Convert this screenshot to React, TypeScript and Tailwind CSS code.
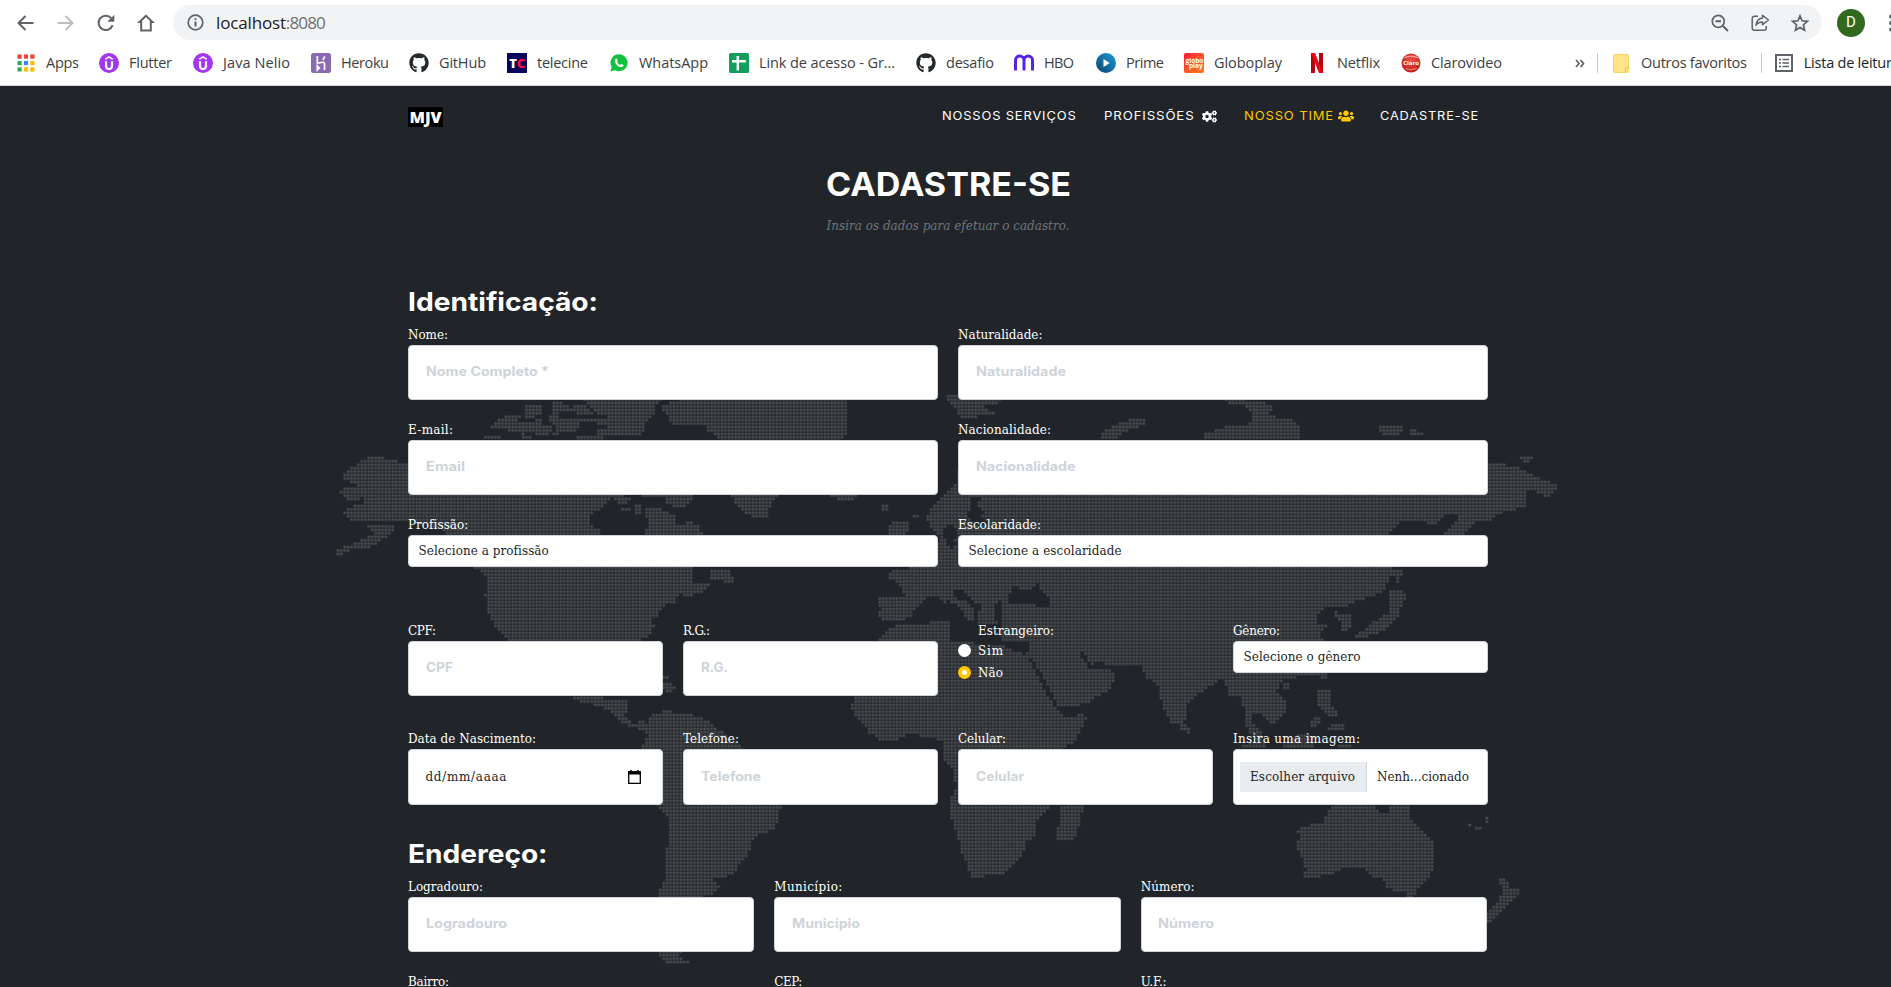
import { useLayoutEffect, useRef, type ReactNode } from "react";
import { FaCogs, FaUsers, FaGithub } from "react-icons/fa";

const SLAB = "font-['DejaVu_Serif_Condensed','DejaVu_Serif',serif] [font-stretch:condensed]";
const GEO = "font-['Inter','Open_Sans',sans-serif]";
const UI = "font-['Open_Sans','Noto_Sans',sans-serif]";

/* Text set to a given measure by adjusting its tracking. */
function Fit({ w, className = "", children }: { w: number; className?: string; children: string }) {
  const ref = useRef<HTMLSpanElement>(null);
  useLayoutEffect(() => {
    const el = ref.current;
    if (!el) return;
    el.style.letterSpacing = "0px";
    const natural = el.getBoundingClientRect().width;
    el.style.letterSpacing = `${(w - natural) / Math.max(1, children.length - 1)}px`;
  }, [w, children]);
  return (
    <span ref={ref} className={`inline-block whitespace-pre ${className}`}>
      {children}
    </span>
  );
}

/* Text set to a given measure by widening its letters. */
function Wide({ w, className = "", children }: { w: number; className?: string; children: string }) {
  const ref = useRef<HTMLSpanElement>(null);
  useLayoutEffect(() => {
    const el = ref.current;
    if (!el) return;
    el.style.transform = "none";
    const natural = el.getBoundingClientRect().width;
    el.style.transform = `scaleX(${w / natural})`;
  }, [w, children]);
  return (
    <span className={`inline-block shrink-0 text-left ${className}`} style={{ width: w }}>
      <span ref={ref} className="inline-block origin-left whitespace-pre">
        {children}
      </span>
    </span>
  );
}

/* ---------- dotted world map ---------- */

const LAND: string[] = [
  "377,456 387,460 408,463 612,470 614,495 606,503 593,513 587,520 587,524 598,530 600,536 624,545 647,535 649,522 645,508 659,508 675,517 675,526 683,526 689,521 696,525 702,535 698,550 691,567 692,585 708,583 706,591 691,593 689,598 679,593 673,599 674,603 663,605 657,615 648,620 655,625 648,635 638,641 636,660 512,660 512,641 497,627 489,613 486,593 489,587 487,577 475,567 448,535 444,530 408,520 401,522 393,522 377,523 369,522 355,522 344,513 350,507 365,503 363,498 350,502 346,497 340,492 349,487 361,487 346,480 344,473 357,465 365,459",
  "375,523 393,524 391,533 385,538 369,547 351,550 336,557 338,550 357,542 375,534 367,527",
  "712,568 726,568 732,578 730,585 724,579 710,580",
  "614,495 630,496 626,505 618,502",
  "622,506 630,506 630,511 622,511",
  "637,505 641,505 641,514 637,514",
  "642,490 691,490 691,497 689,503 679,508 667,503 665,498 642,498",
  "663,405 687,398 847,398 847,420 844,438 800,470 776,495 771,503 765,517 760,520 753,517 740,508 732,495 740,460 720,438 710,432 708,425 683,427 667,422 671,417 663,410",
  "830,490 857,490 857,496 853,500 842,502 832,496",
  "528,405 540,405 540,413 534,417 526,417",
  "493,424 506,416 520,416 516,422 530,424 542,418 542,424 553,426 546,436 532,433 524,434 508,430 493,428",
  "555,401 569,405 571,412 557,413 558,420 579,420 579,427 573,433 555,434 557,427 551,420",
  "573,404 583,405 593,413 590,415 577,413",
  "585,398 663,398 655,405 655,410 647,420 644,425 640,437 612,437 596,433 598,428 610,427 612,424 581,423 583,417 606,419 608,415 602,415 591,407",
  "485,435 498,435 498,440 485,440",
  "522,435 532,435 532,438 522,438",
  "578,437 604,437 604,441 578,441",
  "896,520 906,520 908,530 902,535 889,533 891,527",
  "882,503 886,503 886,510 882,510",
  "912,513 917,513 917,517 912,517",
  "957,483 958,470 1489,463 1493,463 1517,467 1534,477 1552,483 1558,488 1548,498 1538,492 1526,490 1524,507 1501,512 1491,520 1475,520 1466,533 1448,535 1446,532 1460,518 1462,513 1446,513 1434,525 1426,522 1397,523 1385,535 1385,550 1393,568 1389,577 1381,593 1350,603 1340,608 1325,608 1314,615 1318,625 1326,625 1318,635 1324,641 1330,660 1326,673 1299,677 1283,680 1275,690 1285,703 1285,712 1271,725 1267,717 1254,712 1250,712 1251,723 1260,730 1262,747 1254,738 1246,723 1246,710 1242,697 1232,698 1228,685 1222,678 1205,688 1187,703 1185,718 1177,725 1171,723 1162,700 1158,683 1150,680 1142,667 1107,665 1104,660 1093,664 1083,652 1077,648 1078,655 1088,668 1098,668 1107,667 1115,678 1107,690 1087,702 1071,708 1060,708 1046,680 1036,663 1028,655 1028,660 1038,680 1046,697 1058,710 1062,718 1083,714 1085,720 1075,740 1062,749 1045,775 1050,805 1034,823 1034,837 1024,843 1024,850 1015,863 1001,874 979,877 973,877 964,855 960,840 954,823 950,807 951,803 957,787 955,770 944,760 944,740 928,738 910,733 904,737 885,742 869,732 865,723 855,715 852,707 855,697 879,660 879,641 887,632 891,627 916,623 949,622 953,612 944,603 940,598 928,597 922,602 914,608 910,617 900,621 889,622 879,617 882,610 879,602 881,596 906,597 900,583 891,578 889,572 908,568 925,560 938,552 940,537 934,531 930,527 928,517 932,507",
  "947,400 950,395 1001,398 1001,402 983,406 977,417 967,420 958,415 956,407",
  "981,408 993,413 989,417 981,412",
  "1099,440 1107,430 1123,422 1137,418 1146,418 1146,424 1128,430 1112,440",
  "1226,398 1260,401 1271,407 1267,416 1283,418 1293,420 1299,427 1297,440 1205,440 1205,433 1226,427 1250,424 1254,416 1250,407 1230,403",
  "1379,425 1403,427 1397,434 1383,434",
  "1408,428 1416,430 1424,435 1412,434",
  "1521,456 1532,456 1530,460 1524,463",
  "1334,612 1348,613 1352,627 1344,630 1340,620",
  "1395,568 1403,568 1401,574 1396,584",
  "1391,590 1407,593 1401,603 1395,620 1383,630 1360,640 1354,638 1373,623 1389,613 1389,597",
  "1320,690 1328,690 1328,705 1338,710 1338,716 1330,716 1320,706",
  "1342,724 1342,731 1327,729 1332,724",
  "1318,716 1320,720 1313,727 1310,724",
  "1282,747 1290,740 1303,733 1312,738 1312,747",
  "1240,743 1264,742 1262,748 1244,748",
  "1340,743 1350,743 1350,748 1340,748",
  "1284,681 1289,681 1287,688 1283,688",
  "1322,673 1326,673 1325,679 1321,679",
  "1182,723 1188,726 1190,733 1183,731",
  "1062,808 1068,803 1082,803 1081,813 1075,837 1071,841 1059,840 1059,827 1063,820",
  "1299,830 1307,826 1326,822 1328,810 1336,804 1373,804 1377,812 1389,813 1395,803 1407,803 1409,817 1422,830 1434,845 1434,863 1426,880 1417,888 1412,897 1408,897 1406,892 1397,892 1389,887 1383,880 1373,877 1366,867 1348,866 1332,873 1311,878 1303,877 1307,870 1301,853 1297,847 1300,838",
  "1501,876 1509,887 1519,891 1511,902 1501,910 1487,925 1487,912 1499,900 1505,893 1502,884",
  "1469,822 1475,829 1482,826 1475,832",
  "1485,818 1489,818 1489,822 1485,822",
  "571,695 587,697 593,697 626,700 627,712 622,715 632,725 642,721 647,723 655,714 667,711 700,717 716,728 728,737 742,748 781,800 781,805 777,817 773,830 753,837 747,853 732,873 722,880 712,878 719,885 712,893 700,898 695,925 679,953 679,957 689,963 667,963 659,952 655,920 659,897 659,890 667,880 667,857 672,820 657,806 640,770 642,748 649,737 647,730 636,728 624,723 618,717 606,708 596,705 592,702 580,702",
  "663,680 667,683 674,686 671,692 666,691 663,688",
  "665,675 669,675 669,679 665,679",
];

const WATER: string[] = [
  "949,622 966,618 975,624 1001,625 1003,640 1028,641 1027,655 1012,650 1000,645 985,648 970,641 950,640",
  "953,588 962,590 972,600 984,607 976,612 966,602 954,598",
  "975,612 979,612 979,628 975,628",
  "996,605 1001,600 1002,626 993,616",
  "945,600 958,605 966,618 950,622",
  "1009,595 1015,583 1022,590 1030,589 1038,581 1040,590 1051,600 1050,607 1040,607 1032,602 1009,603",
  "973,497 980,497 978,507 984,512 981,519 990,522 978,526 968,518 970,507",
  "945,527 953,524 958,535 952,540 958,545 950,548 944,538",
];

const PITCH = 3.43;

type Pt = [number, number];
const parse = (s: string): Pt[] => s.split(" ").map((p) => p.split(",").map(Number) as Pt);

function inside(poly: Pt[], x: number, y: number) {
  let hit = false;
  for (let i = 0, j = poly.length - 1; i < poly.length; j = i++) {
    const [xi, yi] = poly[i];
    const [xj, yj] = poly[j];
    if (yi > y !== yj > y && x < ((xj - xi) * (y - yi)) / (yj - yi) + xi) hit = !hit;
  }
  return hit;
}

function buildCells() {
  const land = LAND.map(parse);
  const water = WATER.map(parse);
  const box = (p: Pt[]) => [
    Math.min(...p.map((q) => q[0])) - 2,
    Math.max(...p.map((q) => q[0])) + 2,
    Math.min(...p.map((q) => q[1])),
    Math.max(...p.map((q) => q[1])),
  ];
  const boxed = land.map((p) => ({ p, b: box(p) }));
  let d = "";
  for (let r = 115; r < 285; r++) {
    const y = (r + 0.5) * PITCH;
    const rowLand = boxed.filter(({ b }) => y >= b[2] && y <= b[3]);
    let start = -1;
    for (let c = 95; c < 462; c++) {
      const x = (c + 0.5) * PITCH;
      const on =
        rowLand.some(({ p, b }) => x >= b[0] && x <= b[1] && (inside(p, x - 1.3, y) || inside(p, x + 1.3, y))) &&
        !water.some((p) => inside(p, x, y));
      if (on && start < 0) start = c;
      if (!on && start >= 0) {
        d += `M${(start * PITCH).toFixed(2)} ${(r * PITCH).toFixed(2)}h${((c - start) * PITCH).toFixed(2)}v${PITCH}h${(-(c - start) * PITCH).toFixed(2)}z`;
        start = -1;
      }
    }
  }
  return d;
}

const CELLS = buildCells();

function WorldMap() {
  return (
    <svg className="pointer-events-none absolute left-0 top-0" width="1891" height="901" viewBox="0 86 1891 901" aria-hidden="true">
      <defs>
        <pattern id="dots" width={PITCH} height={PITCH} patternUnits="userSpaceOnUse">
          <rect width={PITCH} height={PITCH} fill="#292d31" />
          <rect x="0.6" y="0.6" width="2.2" height="2.2" rx="0.5" fill="#4a4e51" />
        </pattern>
      </defs>
      <path d={CELLS} fill="url(#dots)" />
    </svg>
  );
}

/* ---------- browser chrome ---------- */

function Udemy() {
  return (
    <svg width="20" height="20" viewBox="0 0 20 20">
      <circle cx="10" cy="10" r="10" fill="#a435f0" />
      <path d="M6.300 6.200 10 3.900l3.700 2.300" fill="none" stroke="#fff" strokeWidth="1.700" />
      <path d="M7 8.200v4.800a3 3 0 0 0 6 0V8.200" fill="none" stroke="#fff" strokeWidth="2.200" />
    </svg>
  );
}

function AppsIcon() {
  const colors = ["#ea4335", "#ea4335", "#ea4335", "#34a853", "#4285f4", "#fbbc04", "#34a853", "#fbbc04", "#fbbc04"];
  return (
    <svg width="20" height="20" viewBox="0 0 20 20">
      {colors.map((c, i) => (
        <rect key={i} x={1.5 + (i % 3) * 6.4} y={1.5 + Math.floor(i / 3) * 6.4} width="4.2" height="4.2" fill={c} />
      ))}
    </svg>
  );
}

function Heroku() {
  return (
    <svg width="20" height="20" viewBox="0 0 20 20">
      <rect width="20" height="20" rx="2.5" fill="#8a6bb1" />
      <path d="M6.300 3v7.500c2-1 7.200-2.400 7.200.5v6M6.300 13v4l2-2zM13.500 3.200c-.1 1.500-.8 2.700-1.800 3.600" fill="none" stroke="#fff" strokeWidth="1.700" />
    </svg>
  );
}

function Telecine() {
  return (
    <span className="flex h-5 w-5 items-center justify-center bg-[#05055e] font-['Open_Sans',sans-serif] text-[13px] font-extrabold leading-none tracking-[-0.3px] text-white">
      T<span className="text-[#ff0f3c]">C</span>
    </span>
  );
}

function WhatsApp() {
  return (
    <svg width="18" height="18" viewBox="0 0 18 18">
      <path d="M9.200.300a8.500 8.500 0 1 1-4.100 16L.4 17.600l1.300-4.500A8.500 8.500 0 0 1 9.200.300z" fill="#11c13d" />
      <path d="M5.300 4.900c.6-.9 1.400-.8 1.700 0l.7 1.500c.2.600-.8 1.200-.6 1.600.7 1.400 1.700 2.300 3 2.900.5.200.9-1.200 1.500-.9l1.600.8c.7.5.1 1.800-.8 2.200C8.900 14.200 3.300 8.600 5.300 4.900z" fill="#fff" />
    </svg>
  );
}

function Sheet() {
  return (
    <svg width="20" height="20" viewBox="0 0 20 20">
      <rect width="20" height="20" rx="1.5" fill="#139f5b" />
      <path d="M8.800 3v14.500M3 8.200h14" stroke="#fff" strokeWidth="2.400" />
    </svg>
  );
}

function Hbo() {
  return (
    <svg width="20" height="20" viewBox="0 0 20 20">
      <path d="M1.500 17.500V7.200a4.250 4.250 0 0 1 8.500 0v10.300M10 7.200a4.250 4.250 0 0 1 8.500 0v10.300" fill="none" stroke="#5a22e6" strokeWidth="3" />
    </svg>
  );
}

function Prime() {
  return (
    <svg width="20" height="20" viewBox="0 0 20 20">
      <defs>
        <linearGradient id="prime" x1="1" y1="0" x2="0" y2="1">
          <stop offset="0" stopColor="#1ba0d8" />
          <stop offset="1" stopColor="#0d3e6e" />
        </linearGradient>
      </defs>
      <circle cx="10" cy="10" r="10" fill="url(#prime)" />
      <path d="M7.500 6l6.200 4-6.200 4z" fill="#fff" />
    </svg>
  );
}

function Globo() {
  return (
    <span className="flex h-5 w-5 flex-col justify-center rounded-[2px] bg-linear-to-br from-[#fb0234] to-[#ff7a1c] font-['Open_Sans',sans-serif] text-[6.5px] font-bold leading-[5.5px] text-white">
      <span className="pl-[1.5px]">globo</span>
      <span className="pl-[5px]">play</span>
    </span>
  );
}

function Netflix() {
  return (
    <svg width="20" height="20" viewBox="0 0 20 20">
      <path d="M4 0h4v20H4zM12 0h4v20h-4z" fill="#b1060f" />
      <path d="M4 0h4l8 20h-4z" fill="#e50914" />
    </svg>
  );
}

function Claro() {
  return (
    <svg width="20" height="20" viewBox="0 0 20 20">
      <defs>
        <radialGradient id="claro" cx=".5" cy=".35" r=".65">
          <stop offset="0" stopColor="#ee5046" />
          <stop offset="1" stopColor="#c11f1c" />
        </radialGradient>
      </defs>
      <circle cx="10" cy="10" r="9.500" fill="url(#claro)" />
      <path d="M3.500 4.700Q10 1.500 16.500 4.700" stroke="#f6a49c" strokeWidth="1.300" fill="none" />
      <path d="M4.500 15.500Q10 18 15.500 15.500" stroke="#f08d85" strokeWidth="1" fill="none" />
      <text x="10" y="12" textAnchor="middle" fontSize="6" fontWeight="700" fontFamily="Open Sans, sans-serif" fill="#fff">
        Claro
      </text>
    </svg>
  );
}

function Mark({ icon, label, w, className }: { icon: ReactNode; label: string; w: number; className: string }) {
  return (
    <div className={`flex shrink-0 items-center gap-[10px] ${className}`}>
      <span className="flex h-5 w-5 shrink-0 items-center justify-center">{icon}</span>
      <Fit w={w}>{label}</Fit>
    </div>
  );
}

const STROKE = { fill: "none", stroke: "#5f6368", strokeWidth: 2 } as const;

function Chrome() {
  return (
    <header className={`h-[86px] w-full shrink-0 overflow-hidden border-b border-[#d5d8dc] bg-white text-[#3c4043] ${UI}`}>
      <div className="flex h-[45px] items-center pl-[17px]">
        <svg className="mr-[23px] shrink-0" width="17" height="16" viewBox="0 0 17 16"><path d="M16.500 8H2M8.500 1 1.500 8l7 7" {...STROKE} /></svg>
        <svg className="mr-[23px] shrink-0" width="17" height="16" viewBox="0 0 17 16"><path d="M.5 8H15M8.500 1l7 7-7 7" {...STROKE} stroke="#bcbec1" /></svg>
        <svg className="mr-[22px] shrink-0" width="18" height="18" viewBox="0 0 18 18"><path d="M15.600 11.200A7.200 7.200 0 1 1 14.300 4.200" {...STROKE} /><path d="M17.300.8v7h-7z" fill="#5f6368" /></svg>
        <svg className="mr-[18px] shrink-0" width="18" height="18" viewBox="0 0 18 18"><path d="M9 1.800 2.500 8H4.200v8.500h9.600V8h1.700z" {...STROKE} /></svg>
        <div className="flex h-[35px] w-[1649px] shrink-0 items-center rounded-full bg-[#f1f3f4] pl-[14px] pr-[13px]">
          <svg className="mr-[12px]" width="17" height="17" viewBox="0 0 17 17"><circle cx="8.500" cy="8.500" r="7.300" {...STROKE} strokeWidth="1.700" /><path d="M8.500 7.500v5M8.500 4.200v1.800" {...STROKE} /></svg>
          <div className="flex text-[17px] leading-[34px]">
            <Fit w={70} className="text-[#202124]">localhost</Fit>
            <Fit w={40} className="text-[#6b7075]">:8080</Fit>
          </div>
          <div className="ml-auto flex items-center">
            <svg className="mr-[22px]" width="18" height="18" viewBox="0 0 18 18"><circle cx="7.300" cy="7.300" r="6" {...STROKE} strokeWidth="1.700" /><path d="M4.500 7.300h5.600M11.700 11.700l5.300 5.300" {...STROKE} /></svg>
            <svg className="mr-[21px]" width="19" height="18" viewBox="0 0 19 18"><path d="M7 2.200H3.500a2.300 2.300 0 0 0-2.300 2.300v9.500a2.300 2.300 0 0 0 2.300 2.300h9.500a2.300 2.300 0 0 0 2.300-2.300v-2" {...STROKE} strokeWidth="1.500" /><path d="M11.500 1.300 17.500 6l-6 4.700V8c-3 0-5 1-6.500 3.200C5.500 7.500 8 4.400 11.500 4z" {...STROKE} strokeWidth="1.500" strokeLinejoin="round" /></svg>
            <svg width="18" height="18" viewBox="0 0 18 18"><path d="m9 1.800 2.100 5 5.400.5-4.100 3.600 1.200 5.300L9 13.400l-4.600 2.800 1.200-5.300-4.100-3.600 5.400-.5z" {...STROKE} strokeWidth="1.700" /></svg>
          </div>
        </div>
        <div className="ml-[15px] flex h-[28px] w-[28px] shrink-0 items-center justify-center rounded-full bg-[#33691e] font-['Roboto',sans-serif] text-[15px] text-white">D</div>
        <svg className="ml-[23px] shrink-0" width="6" height="18" viewBox="0 0 6 18"><circle cx="3" cy="2.500" r="2" fill="#5f6368" /><circle cx="3" cy="9" r="2" fill="#5f6368" /><circle cx="3" cy="15.500" r="2" fill="#5f6368" /></svg>
      </div>
      <div className="flex h-[36px] items-center pl-[16px] text-[14.5px]">
        <Mark className="w-[83px]" icon={<AppsIcon />} label="Apps" w={33} />
        <Mark className="w-[94px]" icon={<Udemy />} label="Flutter" w={43} />
        <Mark className="w-[118px]" icon={<Udemy />} label="Java Nelio" w={67} />
        <Mark className="w-[98px]" icon={<Heroku />} label="Heroku" w={48} />
        <Mark className="w-[98px]" icon={<FaGithub size={20} color="#24292e" />} label="GitHub" w={47} />
        <Mark className="w-[102px]" icon={<Telecine />} label="telecine" w={51} />
        <Mark className="w-[120px]" icon={<WhatsApp />} label="WhatsApp" w={69} />
        <Mark className="w-[187px]" icon={<Sheet />} label="Link de acesso - Gr..." w={136} />
        <Mark className="w-[98px]" icon={<FaGithub size={20} color="#24292e" />} label="desafio" w={48} />
        <Mark className="w-[82px]" icon={<Hbo />} label="HBO" w={30} />
        <Mark className="w-[88px]" icon={<Prime />} label="Prime" w={38} />
        <Mark className="w-[123px]" icon={<Globo />} label="Globoplay" w={68} />
        <Mark className="w-[94px]" icon={<Netflix />} label="Netflix" w={43} />
        <Mark className="w-[174px]" icon={<Claro />} label="Clarovideo" w={71} />
        <svg className="shrink-0" width="10" height="9" viewBox="0 0 10 9"><path d="m1 1 3 3.500L1 8M5.500 1l3 3.500L5.500 8" fill="none" stroke="#5f6368" strokeWidth="1.700" /></svg>
        <span className="ml-[12px] h-5 w-px shrink-0 bg-[#c8cacd]" />
        <svg className="ml-[15px] shrink-0" width="17" height="19" viewBox="0 0 17 19"><path d="M2 .5h12a1.500 1.500 0 0 1 1.500 1.500v11.500h.5V17a1.500 1.500 0 0 1-1.500 1.500H2A1.500 1.500 0 0 1 .5 17V2A1.500 1.500 0 0 1 2 .5z" fill="#ffe387" stroke="#f4d568" /><path d="M12.500 18v-4l3.500-1" fill="none" stroke="#e9c23f" /></svg>
        <Fit w={106} className="ml-[11px] shrink-0">Outros favoritos</Fit>
        <span className="ml-[14px] h-5 w-px shrink-0 bg-[#c8cacd]" />
        <svg className="ml-[13px] shrink-0" width="18" height="18" viewBox="0 0 18 18"><rect x="1" y="1" width="16" height="16" {...STROKE} /><path d="M4 5.500h2M4 9h2M4 12.500h2M7.500 5.500H14M7.500 9H14M7.500 12.500H14" {...STROKE} strokeWidth="1.700" /></svg>
        <Fit w={96} className="ml-[11px] shrink-0 text-[#202124]">Lista de leitura</Fit>
      </div>
    </header>
  );
}

/* ---------- form ---------- */

function Label({ w, children }: { w: number; children: string }) {
  return (
    <div className={`h-5 text-[13.3px] leading-[19px] text-white ${SLAB}`}>
      <Fit w={w}>{children}</Fit>
    </div>
  );
}

function EdgeLabel({ w, children }: { w: number; children: string }) {
  return (
    <div className={`flex h-[11px] items-center text-[13.3px] leading-[11px] text-white ${SLAB}`}>
      <Fit w={w}>{children}</Fit>
    </div>
  );
}

const BOX = "flex items-center rounded-[4px] border border-[#ced4da] bg-white";

function Field({ label, lw, hint, hw, tall }: { label: string; lw: number; hint: string; hw: number; tall?: boolean }) {
  return (
    <div>
      <Label w={lw}>{label}</Label>
      <div className={`${tall ? "h-[56px]" : "h-[55px]"} px-[16.5px] pb-px text-[12.8px] font-bold text-[#ced4da] ${BOX} ${GEO}`}>
        <Wide w={hw}>{hint}</Wide>
      </div>
    </div>
  );
}

function Choice({ label, lw, value, vw }: { label: string; lw: number; value: string; vw: number }) {
  return (
    <div>
      <Label w={lw}>{label}</Label>
      <div className={`h-8 px-[9.5px] text-[13.3px] text-[#212529] ${BOX} ${SLAB}`}>
        <Fit w={vw}>{value}</Fit>
      </div>
    </div>
  );
}

function Radio({ label, checked }: { label: string; checked?: boolean }) {
  return (
    <div className={`flex h-[21.5px] items-center text-[13.3px] leading-none text-white ${SLAB}`}>
      <span className={`mr-[7px] flex h-[13px] w-[13px] items-center justify-center rounded-full ${checked ? "bg-[#ffc800]" : "bg-white"}`}>
        {checked && <span className="h-[5px] w-[5px] rounded-full bg-white" />}
      </span>
      <Fit w={25}>{label}</Fit>
    </div>
  );
}

export default function App() {
  return (
    <div className="flex h-[987px] w-[1891px] flex-col overflow-hidden bg-[#212529]">
      <Chrome />
      <main className="relative flex-1 overflow-hidden">
        <WorldMap />
        <div className="relative ml-[408px] w-[1080px]">
          <nav className={`flex h-[60px] items-center text-[12.2px] tracking-[0.8px] text-white ${GEO}`}>
            <div className="mt-[2px] flex h-[20px] w-[35px] items-center justify-center bg-black">
              <Fit w={32} className="font-['Open_Sans',sans-serif] text-[16px] font-extrabold leading-none">MJV</Fit>
            </div>
            <Wide w={134.5} className="ml-[499px]">NOSSOS SERVIÇOS</Wide>
            <Wide w={90.5} className="ml-[27px]">PROFISSÕES</Wide>
            <FaCogs size={15} className="ml-[8px] shrink-0" />
            <Wide w={90} className="ml-[27px] text-[#ffc800]">NOSSO TIME</Wide>
            <FaUsers size={16} color="#ffc800" className="ml-[4px] shrink-0" />
            <Wide w={99} className="ml-[26px]">CADASTRE-SE</Wide>
          </nav>
          <h1 className={`mt-[19px] h-10 text-center text-[32px] font-bold leading-10 text-white ${GEO}`}>
            <Wide w={245}>CADASTRE-SE</Wide>
          </h1>
          <p className={`mt-[11px] h-5 text-center text-[13.3px] italic leading-5 text-[#6c757d] ${SLAB}`}>
            <Fit w={243}>Insira os dados para efetuar o cadastro.</Fit>
          </p>
          <h2 className={`mt-[50px] h-8 text-[25.8px] font-bold leading-8 text-white ${GEO}`}>
            <Wide w={190}>Identificação:</Wide>
          </h2>
          <div className="mt-[7px] grid grid-cols-2 gap-x-5 gap-y-5">
            <Field label="Nome:" lw={40} hint="Nome Completo *" hw={123} />
            <Field label="Naturalidade:" lw={84.5} hint="Naturalidade" hw={90} />
            <Field label="E-mail:" lw={45} hint="Email" hw={39} />
            <Field label="Nacionalidade:" lw={93} hint="Nacionalidade" hw={99.5} />
            <Choice label="Profissão:" lw={60} value="Selecione a profissão" vw={130} />
            <Choice label="Escolaridade:" lw={83} value="Selecione a escolaridade" vw={153} />
          </div>
          <div className="mt-[54px] grid grid-cols-4 gap-x-5 gap-y-[33px]">
            <Field label="CPF:" lw={28} hint="CPF" hw={27} />
            <Field label="R.G.:" lw={27} hint="R.G." hw={27} />
            <div>
              <div className="pl-5">
                <Label w={76}>Estrangeiro:</Label>
              </div>
              <div className="-mt-px">
                <Radio label="Sim" />
                <Radio label="Não" checked />
              </div>
            </div>
            <Choice label="Gênero:" lw={47} value="Selecione o gênero" vw={117} />
            <div>
              <Label w={128}>Data de Nascimento:</Label>
              <div className={`h-[56px] justify-between pl-[16.5px] pr-[21.5px] text-[13.3px] text-[#212529] ${BOX} ${SLAB}`}>
                <Fit w={81}>dd/mm/aaaa</Fit>
                <svg width="13" height="14" viewBox="0 0 13 14">
                  <path d="M.7 2h11.600v11.300H.7z" fill="none" stroke="#000" strokeWidth="1.300" />
                  <path d="M0 1.300h13v3.200H0zM2.200 0h1.500v2H2.200zM9.300 0h1.500v2H9.300z" fill="#000" />
                </svg>
              </div>
            </div>
            <Field label="Telefone:" lw={56} hint="Telefone" hw={60} tall />
            <Field label="Celular:" lw={48} hint="Celular" hw={48} tall />
            <div>
              <Label w={127}>Insira uma imagem:</Label>
              <div className={`h-[56px] pl-[6px] text-[13.3px] text-[#212529] ${BOX} ${SLAB}`}>
                <div className="flex h-[30px] w-[127px] items-center border-r border-[#ced4da] bg-[#e9ecef] pl-[10px]">
                  <Fit w={105}>Escolher arquivo</Fit>
                </div>
                <Fit w={92} className="ml-[10px]">Nenh...cionado</Fit>
              </div>
            </div>
          </div>
          <h2 className={`mt-[33px] h-8 text-[25.8px] font-bold leading-8 text-white ${GEO}`}>
            <Wide w={139.5}>Endereço:</Wide>
          </h2>
          <div className="mt-[7px] grid w-[1079px] grid-cols-3 gap-x-5 gap-y-6">
            <Field label="Logradouro:" lw={75} hint="Logradouro" hw={81} />
            <Field label="Município:" lw={68} hint="Município" hw={68} />
            <Field label="Número:" lw={54} hint="Número" hw={56} />
            <EdgeLabel w={41}>Bairro:</EdgeLabel>
            <EdgeLabel w={28}>CEP:</EdgeLabel>
            <EdgeLabel w={26}>U.F.:</EdgeLabel>
          </div>
        </div>
      </main>
    </div>
  );
}
